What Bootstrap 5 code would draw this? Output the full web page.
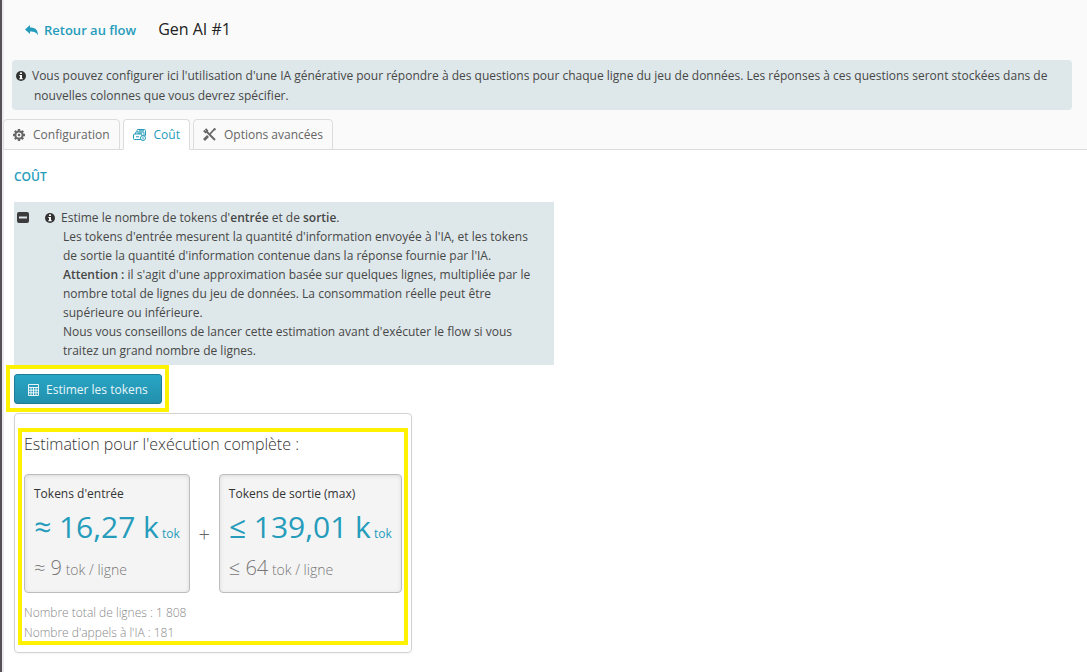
<!DOCTYPE html>
<html lang="fr">
<head>
<meta charset="utf-8">
<meta name="viewport" content="width=device-width, initial-scale=1">
<title>Gen AI #1</title>
<link href="https://cdn.jsdelivr.net/npm/bootstrap@5.3.0/dist/css/bootstrap.min.css" rel="stylesheet">
<style>
:root{--teal:#259cbb;--info:#dee7ea;--hl:#fff200}
body{font-family:"Open Sans",sans-serif;font-size:12px;line-height:19px;color:#474747;background:#fff;min-height:100vh;border-left:2px solid #545257;box-shadow:inset 2px 0 #ece9f0}
svg{display:block;flex:none}
.top-area{background:#fafafa;margin-left:2px}
.title-bar{height:60px;padding-left:21px;gap:22px}
.back-link{color:var(--teal);font-size:13px;font-weight:600;text-decoration:none;gap:6px}
.title-bar h1{font-size:16px;line-height:20px;color:#222;font-weight:400;padding-bottom:2px}
.intro{background:var(--info);margin:0 15px 9px 8px;padding:6px 24px 4px 4px;line-height:20px;border-radius:4px}
.hang{padding-left:18px;text-indent:-18px}
.hang svg{display:inline-block;vertical-align:-1px;margin-right:6px}
.nav-tabs.tabs{--bs-nav-tabs-border-color:#dcdcdc;gap:3px;padding:0}
.tabs .nav-link{height:31px;padding:0 9px;gap:8px;font-size:12px;line-height:20px;color:#666;background:#fafafa;border:1px solid #dcdcdc;border-radius:4px 4px 0 0}
.tabs .nav-item:first-child{margin-left:-1px}
.tabs .nav-link.active{color:var(--teal);background:#fff;border-color:#dcdcdc #dcdcdc #fff}
.pane{padding:17px 12px 19px}
.pane h2{color:var(--teal);font-size:12px;line-height:20px;font-weight:600;margin:0 0 15px}
.help{background:var(--info);max-width:540px;padding:6px 20px 5px 3px;gap:16px}
.help strong{font-weight:600}
.help p{margin:0}
.help p + p{padding-left:18px}
.fold{border:0;background:none;padding:0;margin-top:4px;line-height:0;color:#474747}
.btn-teal{height:30px;padding:1px 13px 0;gap:7px;font-size:12px;line-height:20px;color:#e8f6f9;border:1px solid #1b7c92;border-radius:3px;background:linear-gradient(#29a5c5,#2290ac)}
.btn-teal:hover{color:#fff;border-color:#1b7c92}
.spot::after{content:"";position:absolute;border:4px solid var(--hl);pointer-events:none}
.spot-btn{margin:9px 0}
.spot-btn::after{inset:-9px -7px -8px -8px}
.result{width:fit-content;max-width:100%;border:1px solid #d3d3d3;border-radius:4px;padding:20px 9px 9px;box-shadow:0 1px 3px #0000000d}
.spot-res::after{inset:-6px -6px -2px -6px}
.result h3{font-size:16px;line-height:20px;font-weight:300;color:#333;margin:0 0 20px}
.tile{background:#f4f4f4;border:1px solid #bdbdbd;border-radius:4px;padding:9px;height:119px;box-shadow:inset 0 1px 4px #0000001a}
.tile p{margin:0}
.tile .name{line-height:20px;color:#333}
.tile .total{font-size:30px;line-height:40px;color:var(--teal);margin:3px 0 2px}
.tile .total small{font-size:12px}
.tile .rate{font-size:20px;line-height:24px;font-weight:300;color:#777}
.tile .rate small{font-size:14px}
.plus{font-size:20px;font-weight:300;color:#666;width:29px;padding-top:2px}
.totals{font-weight:300;color:#888;line-height:20px;margin:10px 0 0}
</style>
</head>
<body>
<svg width="0" height="0" class="position-absolute" aria-hidden="true"><symbol id="info" viewBox="0 0 10 10"><circle cx="5" cy="5" r="5" fill="#333"/><path d="M4 1.500h2v1.500H4zM3.300 4H6v3.200h.8v1H3.300v-1H4V5H3.300z" fill="#fff"/></symbol></svg>
<header class="top-area">
  <div class="title-bar d-flex align-items-center">
    <a href="#" class="back-link d-flex align-items-center"><svg width="13" height="11" viewBox="0 0 13 11"><path fill="currentColor" d="M0 4.500 5 0v2.500c5.200 0 8 2 8 8-1.300-3-3.500-4-8-4V9z"/></svg>Retour au flow</a>
    <h1 class="mb-0">Gen AI #1</h1>
  </div>
  <div class="intro"><div class="hang"><svg width="10" height="10"><use href="#info"/></svg>Vous pouvez configurer ici l'utilisation d'une IA générative pour répondre à des questions pour chaque ligne du jeu de données. Les réponses à ces questions seront stockées dans de nouvelles colonnes que vous devrez spécifier.</div></div>
  <ul class="nav nav-tabs tabs">
    <li class="nav-item"><a class="nav-link d-flex align-items-center" href="#"><svg width="12" height="12" viewBox="0 0 12 12"><path stroke="currentColor" stroke-width="2.400" d="M6 0v2.500M6 9.500V12M0 6h2.500M9.500 6H12M1.800 1.800l1.700 1.700M8.500 8.500l1.700 1.700M1.800 10.200l1.700-1.700M8.500 3.500l1.700-1.700"/><circle cx="6" cy="6" r="3.600" fill="none" stroke="currentColor" stroke-width="2"/><circle cx="6" cy="6" r="1.300" fill="currentColor"/></svg>Configuration</a></li>
    <li class="nav-item"><a class="nav-link active d-flex align-items-center" aria-current="page" href="#"><svg width="13" height="12" viewBox="0 0 13 12" fill="none" stroke="currentColor"><path d="M4 3V1.500Q4 .5 5 .5h6.500q1 0 1 1V6q0 1-1 1M2.500 5V4q0-1 1-1H10q1 0 1 1v3M.5 6q0-1 1-1H8q1 0 1 1v4.500H1.500q-1 0-1-1zM6 1.800h5M4.500 4.200H9"/><circle cx="10" cy="9" r="2.500" fill="#fff"/><path d="M10 7.500v3M3 7.800h3"/></svg>Coût</a></li>
    <li class="nav-item"><a class="nav-link d-flex align-items-center" href="#"><svg width="13" height="13" viewBox="0 0 13 13" fill="none" stroke="currentColor"><path stroke-width="2" d="m3.500 3.500 8.500 8.500"/><path stroke-width="1.800" d="M.8 2.500 2.500 4.200 4.200 2.500 2.500.8M7 6l4.500-5"/><path stroke-width="2.600" d="m1 12 4-4"/><path d="m10.500 1.200 1.500-.8.6.6-.8 1.500"/></svg>Options avancées</a></li>
  </ul>
</header>
<main class="pane">
  <h2>COÛT</h2>
  <section class="help d-flex align-items-start">
    <button class="fold" type="button" aria-label="Replier"><svg width="12" height="11" viewBox="0 0 12 11"><rect width="12" height="11" rx="2" fill="#3c3c3c"/><path d="M2 4.500h8v2H2z" fill="#dee7ea"/></svg></button>
    <div>
      <p class="hang"><svg width="10" height="10"><use href="#info"/></svg>Estime le nombre de tokens d'<strong>entrée</strong> et de <strong>sortie</strong>.</p>
      <p>Les tokens d'entrée mesurent la quantité d'information envoyée à l'IA, et les tokens de sortie la quantité d'information contenue dans la réponse fournie par l'IA.</p>
      <p><strong>Attention :</strong> il s'agit d'une approximation basée sur quelques lignes, multipliée par le nombre total de lignes du jeu de données. La consommation réelle peut être supérieure ou inférieure.</p>
      <p>Nous vous conseillons de lancer cette estimation avant d'exécuter le flow si vous traitez un grand nombre de lignes.</p>
    </div>
  </section>
  <div class="spot spot-btn position-relative d-table">
    <button type="button" class="btn btn-teal d-flex align-items-center"><svg width="11" height="12" viewBox="0 0 11 12" fill="none" stroke="currentColor"><path d="M.5.5h10v11H.5zM.5 3.500h10M.5 6.200h10M.5 8.800h10M3 3.500v8M5.500 3.500v8M8 3.500v8"/></svg>Estimer les tokens</button>
  </div>
  <section class="result">
    <div class="spot spot-res position-relative">
      <h3>Estimation pour l'exécution complète :</h3>
      <div class="d-flex align-items-center">
        <div class="tile"><p class="name">Tokens d'entrée</p><p class="total">≈ 16,27 k<small> tok</small></p><p class="rate">≈ 9<small> tok / ligne</small></p></div>
        <div class="plus text-center">+</div>
        <div class="tile"><p class="name">Tokens de sortie (max)</p><p class="total">≤ 139,01 k<small> tok</small></p><p class="rate">≤ 64<small> tok / ligne</small></p></div>
      </div>
      <p class="totals">Nombre total de lignes : 1 808<br>Nombre d'appels à l'IA : 181</p>
    </div>
  </section>
</main>
<script src="https://cdn.jsdelivr.net/npm/bootstrap@5.3.0/dist/js/bootstrap.bundle.min.js"></script>
</body>
</html>
